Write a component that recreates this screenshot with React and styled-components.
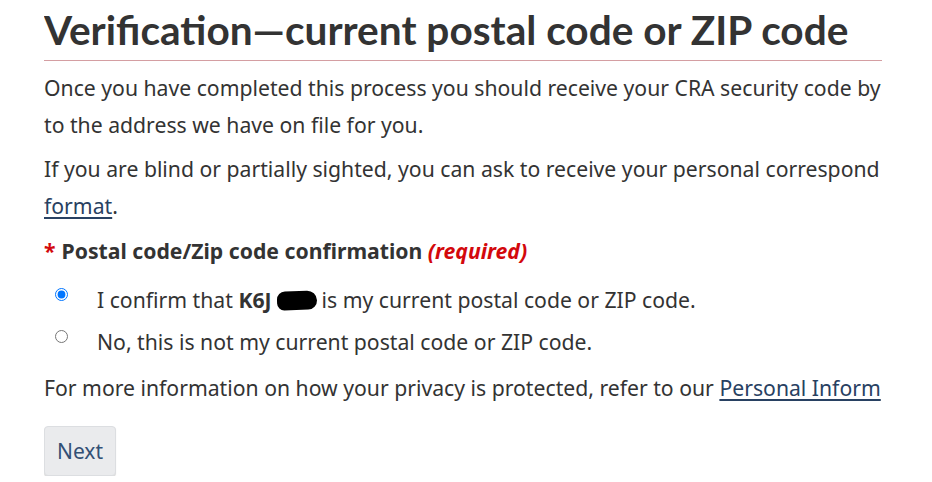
import React from "react";
import styled, { createGlobalStyle } from "styled-components";

const GlobalStyle = createGlobalStyle`
  html, body {
    margin: 0;
    padding: 0;
    background: #fff;
  }
  body {
    font-family: "Noto Sans", "DejaVu Sans", sans-serif;
    color: #333;
  }
`;

const Page = styled.main`
  width: 838px;
  margin-left: 44px;
  overflow: hidden;
`;

const Title = styled.h1`
  font-family: Lato, "Noto Sans", sans-serif;
  font-weight: 700;
  font-size: 40.6px;
  line-height: 50px;
  color: #333;
  margin: 5px 0 0;
  padding-bottom: 5px;
  border-bottom: 1px solid #d49ea2;
  white-space: nowrap;
`;

const Para = styled.p`
  font-size: 21.2px;
  line-height: 37px;
  margin: ${(p) => p.$top || 7}px 0 0;
  white-space: nowrap;
`;

const Link = styled.a`
  color: #284162;
  text-decoration: underline;
  text-underline-offset: 3px;
`;

const Fieldset = styled.fieldset`
  border: 0;
  padding: 0;
  margin: 8px 0 0;
`;

const Legend = styled.legend`
  padding: 0;
  font-size: 21.2px;
  line-height: 37px;
  font-weight: 700;
  white-space: nowrap;
`;

const Required = styled.span`
  color: #d3080c;
  margin-right: 6px;
`;

const RequiredNote = styled.em`
  color: #d3080c;
  font-weight: 700;
`;

const Choices = styled.div`
  display: flex;
  flex-direction: column;
  gap: 5px;
  margin-top: 12px;
`;

const Choice = styled.label`
  display: flex;
  align-items: flex-start;
  font-size: 21.2px;
  line-height: 37px;
  white-space: nowrap;
`;

const Radio = styled.input.attrs({ type: "radio" })`
  width: 13px;
  height: 13px;
  margin: 7px 0 0 11px;
  flex: none;
  accent-color: #0075ff;
`;

const ChoiceText = styled.span`
  margin-left: 29px;
`;

const Redacted = styled.span`
  display: inline-block;
  width: 40px;
  height: 19px;
  background: #000;
  border-radius: 9px 11px 10px 8px;
  vertical-align: -2px;
  margin: 0 5px 0 5px;
  transform: rotate(-2deg);
`;

const Button = styled.button`
  display: block;
  margin-top: 20px;
  width: 72px;
  height: 50px;
  font-family: "Noto Sans", sans-serif;
  font-size: 21px;
  color: #335075;
  background: #eaebed;
  border: 1px solid #dcdee1;
  border-radius: 4px;
  box-shadow: 0 1px 1px rgba(0, 0, 0, 0.15);
  padding: 0;
`;

export default function App() {
  return (
    <>
      <GlobalStyle />
      <Page>
        <Title>Verification—current postal code or ZIP code</Title>
        <Para $top={8}>
          Once you have completed this process you should receive your CRA security code by
          <br />
          to the address we have on file for you.
        </Para>
        <Para>
          If you are blind or partially sighted, you can ask to receive your personal correspond
          <br />
          <Link href="#">format</Link>.
        </Para>
        <Fieldset>
          <Legend>
            <Required>*</Required>Postal code/Zip code confirmation <RequiredNote>(required)</RequiredNote>
          </Legend>
          <Choices>
            <Choice>
              <Radio name="postal" defaultChecked />
              <ChoiceText>
                I confirm that <strong>K6J</strong>
                <Redacted />
                is my current postal code or ZIP code.
              </ChoiceText>
            </Choice>
            <Choice>
              <Radio name="postal" />
              <ChoiceText>No, this is not my current postal code or ZIP code.</ChoiceText>
            </Choice>
          </Choices>
        </Fieldset>
        <Para $top={9}>
          For more information on how your privacy is protected, refer to our{" "}
          <Link href="#">Personal Inform</Link>
        </Para>
        <Button>Next</Button>
      </Page>
    </>
  );
}
